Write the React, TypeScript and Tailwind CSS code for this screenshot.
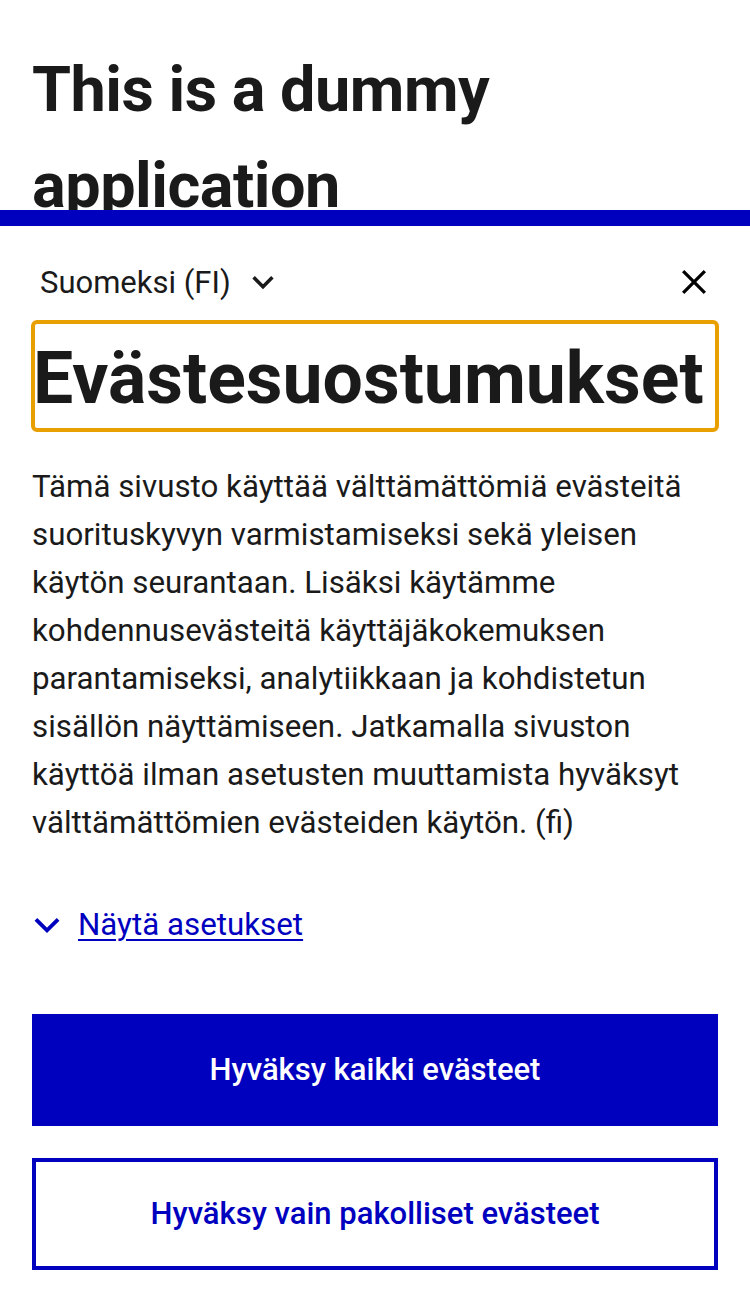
import React from "react";

function Chevron({ className }: { className?: string }) {
  return (
    <svg viewBox="0 0 24 24" className={className} fill="none" stroke="currentColor" strokeWidth={3} strokeLinecap="square">
      <polyline points="5,9 12,16 19,9" />
    </svg>
  );
}

export default function App() {
  return (
    <div className="relative min-h-[1302px] bg-white font-['Roboto',sans-serif] text-[#1a1a1a]">
      <main className="px-8 pt-[42px]">
        <h1 className="text-[63px] font-bold leading-[96px] tracking-[-0.5px]">This is a dummy application</h1>
      </main>

      <div className="fixed inset-x-0 bottom-0 border-t-[16px] border-[#0000bf] bg-white">
        <div className="px-8 pb-8 pt-6">
          <div className="flex h-16 items-center justify-between">
            <button className="flex items-center gap-[18px] pl-[8px] text-[31px] leading-none text-[#1a1a1a]">
              <span>Suomeksi (FI)</span>
              <Chevron className="h-[28px] w-[28px]" />
            </button>
            <button aria-label="close" className="mr-[11px] text-black">
              <svg viewBox="0 0 24 24" className="h-[26px] w-[26px]" fill="none" stroke="currentColor" strokeWidth={3}>
                <line x1="2" y1="2" x2="22" y2="22" />
                <line x1="22" y1="2" x2="2" y2="22" />
              </svg>
            </button>
          </div>

          <div className="mt-[6px] -mx-[1px] rounded-[6px] border-4 border-[#e8a000]">
            <h2 className="-ml-[2px] whitespace-nowrap pt-[5px] text-[71.5px] font-bold leading-[99px]">Evästesuostumukset</h2>
          </div>

          <p className="mt-[31px] text-[31.3px] leading-[48px]">
            Tämä sivusto käyttää välttämättömiä evästeitä suorituskyvyn varmistamiseksi sekä yleisen käytön seurantaan. Lisäksi käytämme kohdennusevästeitä käyttäjäkokemuksen parantamiseksi, analytiikkaan ja kohdistetun sisällön näyttämiseen. Jatkamalla sivuston käyttöä ilman asetusten muuttamista hyväksyt välttämättömien evästeiden käytön. (fi)
          </p>

          <div className="mt-[54px] flex h-12 items-center gap-[18px] text-[#0000bf]">
            <svg viewBox="0 0 24 24" className="ml-[2px] h-[26px] w-[26px]" fill="none" stroke="currentColor" strokeWidth={3.5} strokeLinecap="square">
              <polyline points="3,8 12,17 21,8" />
            </svg>
            <a href="#" className="text-[31.3px] leading-[48px] underline underline-offset-[4px] decoration-[2px]">Näytä asetukset</a>
          </div>

          <button className="mt-[65px] flex h-[112px] w-full items-center justify-center bg-[#0000bf] text-[31px] font-medium text-white">
            Hyväksy kaikki evästeet
          </button>
          <button className="mt-8 flex h-[112px] w-full items-center justify-center border-4 border-[#0000bf] bg-white text-[31px] font-medium text-[#0000bf]">
            Hyväksy vain pakolliset evästeet
          </button>
        </div>
      </div>
    </div>
  );
}
